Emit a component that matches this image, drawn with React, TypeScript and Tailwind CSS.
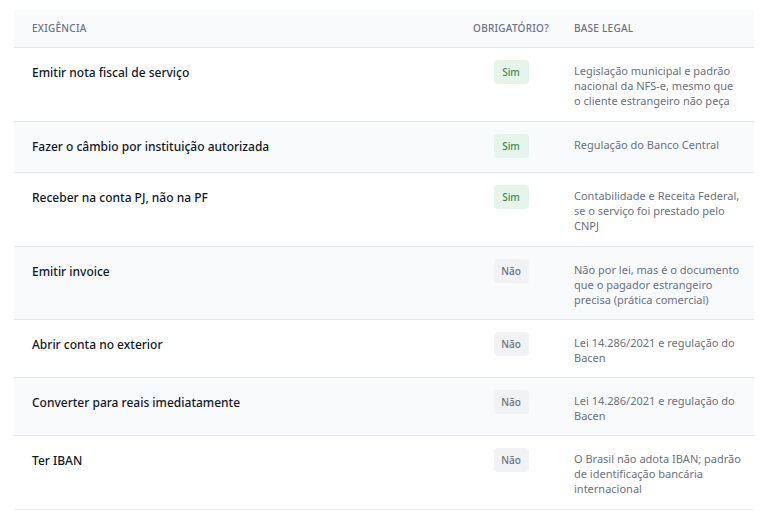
const rows = [
  { req: 'Emitir nota fiscal de serviço', ok: true, base: 'Legislação municipal e padrão nacional da NFS-e, mesmo que o cliente estrangeiro não peça', h: 'h-[74px]' },
  { req: 'Fazer o câmbio por instituição autorizada', ok: true, base: 'Regulação do Banco Central', h: 'h-[51px]' },
  { req: 'Receber na conta PJ, não na PF', ok: true, base: 'Contabilidade e Receita Federal, se o serviço foi prestado pelo CNPJ', h: 'h-[74px]' },
  { req: 'Emitir invoice', ok: false, base: 'Não por lei, mas é o documento que o pagador estrangeiro precisa (prática comercial)', h: 'h-[73px]' },
  { req: 'Abrir conta no exterior', ok: false, base: 'Lei 14.286/2021 e regulação do Bacen', h: 'h-[58px]' },
  { req: 'Converter para reais imediatamente', ok: false, base: 'Lei 14.286/2021 e regulação do Bacen', h: 'h-[58px]' },
  { req: 'Ter IBAN', ok: false, base: 'O Brasil não adota IBAN; padrão de identificação bancária internacional', h: 'h-[74px]' },
]

export default function App() {
  return (
    <div className="min-h-[511px] bg-white px-[14px] pt-[10px] font-['Inter',sans-serif]">
      <div className="w-[740px]">
        <div className="grid h-[38px] grid-cols-[442px_110px_188px] items-center border-b border-gray-200 bg-[#f9fafb] text-[10px] font-medium tracking-wide text-[#6b7280]">
          <div className="pl-[18px]">EXIGÊNCIA</div>
          <div className="text-center">OBRIGATÓRIO?</div>
          <div className="pl-2">BASE LEGAL</div>
        </div>
        {rows.map((r, i) => (
          <div
            key={r.req}
            className={`grid grid-cols-[442px_110px_188px] items-start border-b border-gray-200 pt-[15px] ${r.h} ${i % 2 === 1 ? 'bg-[#f9fafb]' : 'bg-white'}`}
          >
            <div className="pl-[18px] pt-[1px] text-[12px] font-medium text-[#111827]">{r.req}</div>
            <div className="flex justify-center">
              <span
                className={`mt-[-3px] flex h-[24px] w-[35px] items-center justify-center rounded text-[10px] font-medium ${
                  r.ok ? 'bg-[#e7f4eb] text-[#3d8b57]' : 'bg-[#f1f2f4] text-[#6b7280]'
                }`}
              >
                {r.ok ? 'Sim' : 'Não'}
              </span>
            </div>
            <div className="pl-2 pr-3 text-[11px] leading-[15px] text-[#6b7280]">{r.base}</div>
          </div>
        ))}
      </div>
    </div>
  )
}
